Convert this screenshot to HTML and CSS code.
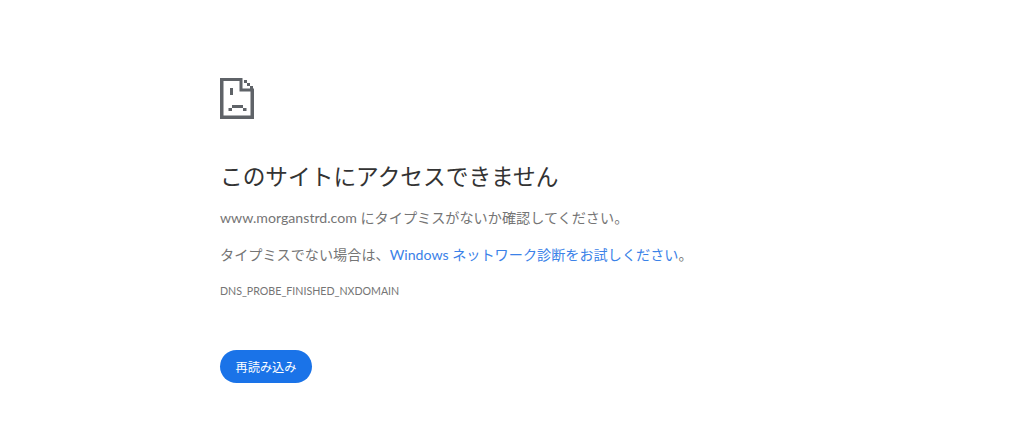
FILE: index.html
```html
<!DOCTYPE html>
<html lang="ja">
<head>
<meta charset="utf-8">
<title>このサイトにアクセスできません</title>
<link rel="stylesheet" href="styles.css">
</head>
<body>
<main class="page">
  <svg class="icon" viewBox="0 0 34 41" width="34" height="41" aria-hidden="true">
    <path class="ink" d="M0 0H22V3H3.500V37.500H30.500V13H34V41H0Z"/>
    <path class="ink" d="M19.500 0H22.500V10.500H34V13.500H19.500Z"/>
    <path class="ink" d="M24 2H27V5H24ZM27 5H30V8H27ZM30 8H33V11H30Z"/>
    <path class="ink" d="M10 10H13V17H10Z"/>
    <path class="ink" d="M12 27H23V30H12ZM8.500 30H12V33H8.500ZM23 30H26.500V33H23Z"/>
  </svg>
  <h1 class="title">このサイトにアクセスできません</h1>
  <p class="text first">www.morganstrd.com にタイプミスがないか確認してください。</p>
  <p class="text second">タイプミスでない場合は、<a class="link" href="#">Windows ネットワーク診断をお試しください</a>。</p>
  <div class="code">DNS_PROBE_FINISHED_NXDOMAIN</div>
  <button class="reload" type="button">再読み込み</button>
</main>
</body>
</html>
```
FILE: styles.css
```css
html, body {
  margin: 0;
  padding: 0;
  background: #fff;
}
body {
  height: 442px;
  overflow: hidden;
  font-family: "Lato", "Noto Sans CJK JP", sans-serif;
}
.page {
  display: flex;
  flex-direction: column;
  align-items: flex-start;
  padding: 78px 0 0 220px;
}
.icon {
  display: block;
}
.ink {
  fill: #5f6368;
}
.title {
  margin: 41px 0 0;
  font-size: 22.700px;
  font-weight: 400;
  line-height: 34px;
  color: #333;
}
.text {
  margin: 0;
  font-size: 14.150px;
  line-height: 20px;
  color: #757575;
}
.first {
  margin-top: 14px;
}
.second {
  margin-top: 17px;
}
.link {
  color: #3b82e8;
  text-decoration: none;
}
.code {
  margin-top: 18px;
  font-size: 10.650px;
  line-height: 16px;
  color: #757575;
}
.reload {
  margin-top: 51px;
  width: 92px;
  height: 33px;
  padding: 0;
  border: 0;
  border-radius: 17px;
  background: #1a73e8;
  color: #fff;
  font: 400 12.200px "Noto Sans CJK JP", sans-serif;
}
```
